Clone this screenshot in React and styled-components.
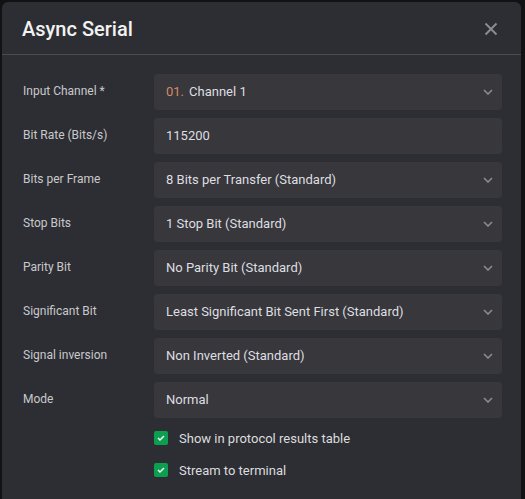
import React from "react";
import styled, { createGlobalStyle } from "styled-components";

const GlobalStyle = createGlobalStyle`
  html, body {
    margin: 0;
    padding: 0;
    background: #121214;
    font-family: Roboto, "Liberation Sans", sans-serif;
  }
`;

const Page = styled.div`
  width: 525px;
  height: 499px;
  overflow: hidden;
  padding: 2px 4px 0 2px;
  box-sizing: border-box;
`;

const Modal = styled.div`
  background: #2d2e33;
  border-radius: 6px;
  height: 520px;
`;

const Header = styled.div`
  display: flex;
  align-items: center;
  justify-content: space-between;
  height: 52px;
  padding: 0 20px;
  border-bottom: 1px solid #4a4b50;
`;

const Title = styled.h1`
  margin: 0;
  font-size: 20px;
  font-weight: 500;
  color: #f2f2f2;
  padding-top: 2px;
`;

const CloseButton = styled.button`
  background: none;
  border: none;
  padding: 0;
  width: 14px;
  height: 14px;
  display: flex;
  align-items: center;
  justify-content: center;
  cursor: pointer;
  margin-right: 3px;
  margin-top: 2px;
`;

const Body = styled.div`
  padding: 19px 19px 0 20px;
  display: flex;
  flex-direction: column;
  gap: 8px;
`;

const Row = styled.div`
  display: grid;
  grid-template-columns: 132px 1fr;
  align-items: center;
`;

const Label = styled.label`
  font-size: 12px;
  color: #c9c9cc;
  padding-left: 1px;
  margin-top: -2px;
`;

const Field = styled.div`
  display: flex;
  align-items: center;
  justify-content: space-between;
  height: 36px;
  background: #37373c;
  border-radius: 4px;
  padding: 0 9px 1px 12px;
  box-sizing: border-box;
  font-size: 13px;
  color: #dedee0;
`;

const Prefix = styled.span`
  color: #d48a68;
  margin-right: 5px;
`;

const Checks = styled.div`
  display: flex;
  flex-direction: column;
  gap: 16px;
  padding: 4px 0 0 132px;
`;

const CheckRow = styled.div`
  display: flex;
  align-items: center;
  gap: 11px;
  height: 16px;
  font-size: 13px;
  color: #dcdcde;
`;

const Box = styled.span`
  width: 14px;
  height: 14px;
  border-radius: 2px;
  background: #0c9f4f;
  display: flex;
  align-items: center;
  justify-content: center;
`;

const Chevron = () => (
  <svg width="10" height="6" viewBox="0 0 10 6">
    <path d="M1 1l4 4 4-4" fill="none" stroke="#8b8b91" strokeWidth="1.6" />
  </svg>
);

const Check = () => (
  <svg width="8" height="6" viewBox="0 0 8 6">
    <path d="M1 3l2 2 4-4" fill="none" stroke="#fff" strokeWidth="1.4" />
  </svg>
);

const rows = [
  { label: "Input Channel *", prefix: "01.", value: "Channel 1", select: true },
  { label: "Bit Rate (Bits/s)", value: "115200" },
  { label: "Bits per Frame", value: "8 Bits per Transfer (Standard)", select: true },
  { label: "Stop Bits", value: "1 Stop Bit (Standard)", select: true },
  { label: "Parity Bit", value: "No Parity Bit (Standard)", select: true },
  { label: "Significant Bit", value: "Least Significant Bit Sent First (Standard)", select: true },
  { label: "Signal inversion", value: "Non Inverted (Standard)", select: true },
  { label: "Mode", value: "Normal", select: true },
];

export default function App() {
  return (
    <Page>
      <GlobalStyle />
      <Modal>
        <Header>
          <Title>Async Serial</Title>
          <CloseButton aria-label="Close">
            <svg width="14" height="14" viewBox="0 0 14 14">
              <path d="M1.5 1.5l11 11M12.5 1.5l-11 11" stroke="#8c8c91" strokeWidth="1.9" />
            </svg>
          </CloseButton>
        </Header>
        <Body>
          {rows.map((r) => (
            <Row key={r.label}>
              <Label>{r.label}</Label>
              <Field>
                <span>
                  {r.prefix && <Prefix>{r.prefix}</Prefix>}
                  {r.value}
                </span>
                {r.select && <Chevron />}
              </Field>
            </Row>
          ))}
          <Checks>
            <CheckRow>
              <Box><Check /></Box>
              Show in protocol results table
            </CheckRow>
            <CheckRow>
              <Box><Check /></Box>
              Stream to terminal
            </CheckRow>
          </Checks>
        </Body>
      </Modal>
    </Page>
  );
}
